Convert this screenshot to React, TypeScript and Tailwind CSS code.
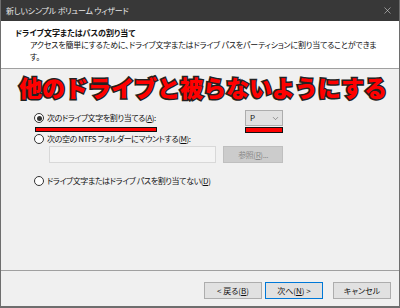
import { ChevronDown, X } from 'lucide-react';

function Radio({ checked = false }: { checked?: boolean }) {
  return (
    <span className="w-[10px] h-[10px] rounded-full border border-[#333] bg-white flex items-center justify-center shrink-0">
      {checked && <span className="w-[5px] h-[5px] rounded-full bg-[#333]" />}
    </span>
  );
}

function Button({ label, focused = false }: { label: React.ReactNode; focused?: boolean }) {
  return (
    <div
      className={`h-[17px] w-[58px] flex items-center justify-center text-[8px] text-[#111] bg-[#e1e1e1] border ${
        focused ? 'border-[#0078d7]' : 'border-[#adadad]'
      }`}
    >
      {label}
    </div>
  );
}

export default function App() {
  return (
    <div className="w-[400px] h-[308px] flex flex-col bg-[#f0f0f0] border-x border-b-2 border-[#6e6e6e] font-['Noto_Sans_CJK_JP',sans-serif] [font-feature-settings:'palt'] overflow-hidden">
      {/* Title bar */}
      <div className="h-[21px] shrink-0 bg-[#383838] flex items-center justify-between pl-[5px] pr-[6px] text-[8px] tracking-[-0.2px] text-[#e8e8e8]">
        <span>新しいシンプル ボリューム ウィザード</span>
        <X size={11} strokeWidth={1.2} className="text-[#e0e0e0]" />
      </div>

      {/* Header */}
      <div className="h-[48px] shrink-0 bg-white border-b border-[#a0a0a0] pt-[6px] pl-[14px] text-[8px] leading-[12px] text-[#111]">
        <div className="font-bold">ドライブ文字またはパスの割り当て</div>
        <div className="pl-[15px] whitespace-nowrap tracking-[-0.2px]">
          アクセスを簡単にするために、ドライブ文字またはドライブ パスをパーティションに割り当てることができま
          <br />
          す。
        </div>
      </div>

      {/* Body */}
      <div className="flex-1 flex flex-col">
        <div className="pt-[4px] pl-[6px] text-center text-[23px] leading-[28px] font-black text-[#ff0000] [-webkit-text-stroke:3px_#222] [paint-order:stroke_fill] [font-feature-settings:normal]">
          他のドライブと被らないようにする
        </div>

        <div className="pl-[33px] pr-[116px] mt-[9px] text-[8px] tracking-[-0.4px] text-[#111]">
          <div className="flex items-center h-[16px] gap-[3px] relative">
            <Radio checked />
            <span>次のドライブ文字を割り当てる(<span className="underline">A</span>):</span>
            <div className="ml-auto w-[38px] h-[16px] bg-[#e1e1e1] border border-[#adadad] flex items-center justify-between pl-[4px] pr-[2px]">
              <span>P</span>
              <ChevronDown size={9} strokeWidth={1.5} className="text-[#555]" />
            </div>
            <div className="absolute left-[1px] top-[17px] w-[122px] h-[5px] bg-[#ff0000] border border-[#111]" />
            <div className="absolute right-0 top-[17px] w-[38px] h-[6px] bg-[#ff0000] border border-[#111]" />
          </div>

          <div className="flex items-center h-[12px] gap-[3px] mt-[7px]">
            <Radio />
            <span>次の空の NTFS フォルダーにマウントする(<span className="underline">M</span>):</span>
          </div>

          <div className="flex items-center gap-[7px] pl-[15px] mt-[1px]">
            <div className="w-[168px] h-[17px] bg-[#f4f4f4] border border-[#d8d8d8]" />
            <div className="w-[60px] h-[17px] bg-[#cccccc] border border-[#bfbfbf] flex items-center justify-center text-[#8a8a8a]">
              参照(<span className="underline">R</span>)...
            </div>
          </div>

          <div className="flex items-center h-[12px] gap-[3px] mt-[12px]">
            <Radio />
            <span>ドライブ文字またはドライブ パスを割り当てない(<span className="underline">D</span>)</span>
          </div>
        </div>
      </div>

      {/* Footer */}
      <div className="h-[36px] shrink-0 border-t border-[#a0a0a0] flex items-start justify-end pt-[11px] pr-[8px]">
        <div className="flex gap-[3px]">
          <Button label={<span>&lt; 戻る(<span className="underline">B</span>)</span>} />
          <Button focused label={<span>次へ(<span className="underline">N</span>) &gt;</span>} />
        </div>
        <div className="ml-[10px]">
          <Button label="キャンセル" />
        </div>
      </div>
    </div>
  );
}
